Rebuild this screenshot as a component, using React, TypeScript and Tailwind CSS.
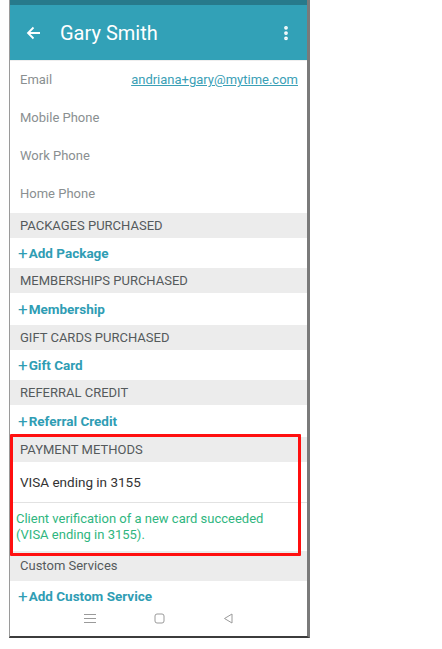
import { MoreVertical } from 'lucide-react'

const font = { fontFamily: 'Roboto, "Noto Sans", sans-serif' }

function InfoRow({ label, value }: { label: string; value?: string }) {
  return (
    <div className="flex h-[38px] items-center justify-between pl-[10px] pr-[9px] bg-white">
      <span className="text-[13px] text-[#8a8f91]">{label}</span>
      {value && <span className="text-[13px] text-[#3aa0b6] underline">{value}</span>}
    </div>
  )
}

function SectionHeader({ title, className = 'h-[25px]' }: { title: string; className?: string }) {
  return (
    <div className={`flex items-center pl-[10px] bg-[#ececec] text-[13px] text-[#555a5c] ${className}`}>
      {title}
    </div>
  )
}

function AddRow({ label, height = 'h-[30px]' }: { label: string; height?: string }) {
  return (
    <div className={`flex items-center pl-[8px] bg-white text-[13.5px] font-bold text-[#2f9db4] ${height}`}>
      <span className="text-[17px] font-normal leading-none mr-[1px]">+</span>
      {label}
    </div>
  )
}

export default function App() {
  return (
    <div className="w-[442px] h-[649px] bg-white" style={font}>
      <div className="ml-[9px] w-[301px] h-[638px] border-l border-[#9a9a9a] border-r-[3px] border-r-[#7a7a7a] border-b-2 border-b-[#3c3c3c] flex flex-col overflow-hidden relative">
        <div className="h-[5px] bg-[#277a8b]" />
        <div className="h-[55px] bg-[#32a1b7] flex items-center text-white">
          <svg width="16" height="16" viewBox="0 0 16 16" className="ml-[16px]" fill="none" stroke="white" strokeWidth="1.8">
            <path d="M14 8H2M7.5 2.5L2 8l5.5 5.5" />
          </svg>
          <span className="ml-[18px] text-[20px]">Gary Smith</span>
          <MoreVertical className="ml-auto mr-[12px] w-[18px] h-[18px]" strokeWidth={3} />
        </div>
        <div className="h-px bg-[#eeeeee]" />

        <InfoRow label="Email" value="andriana+gary@mytime.com" />
        <InfoRow label="Mobile Phone" />
        <InfoRow label="Work Phone" />
        <InfoRow label="Home Phone" />

        <SectionHeader title="PACKAGES PURCHASED" />
        <AddRow label="Add Package" />
        <SectionHeader title="MEMBERSHIPS PURCHASED" />
        <AddRow label="Membership" height="h-[32px]" />
        <SectionHeader title="GIFT CARDS PURCHASED" />
        <AddRow label="Gift Card" />
        <SectionHeader title="REFERRAL CREDIT" />
        <AddRow label="Referral Credit" height="h-[32px]" />

        <SectionHeader title="PAYMENT METHODS" />
        <div className="h-[41px] flex items-center pl-[10px] border-b border-[#e2e2e2] text-[13.5px] text-[#333]">
          VISA ending in 3155
        </div>
        <div className="h-[48px] flex flex-col justify-center pl-[6px] text-[13px] leading-[16px] text-[#2fb680]">
          <span>Client verification of a new card succeeded</span>
          <span>(VISA ending in 3155).</span>
        </div>

        <SectionHeader title="Custom Services" className="h-[30px] text-[13.5px] text-[#4a4f51]" />
        <div className="h-[21px] overflow-hidden">
          <div className="h-[30px] flex items-center pl-[8px] text-[13.5px] font-bold text-[#2f9db4]">
            <span className="text-[17px] font-normal leading-none mr-[1px]">+</span>
            Add Custom Service
          </div>
        </div>

        <div className="flex-1 bg-white flex items-center justify-center gap-[58px] pb-[2px]">
          <svg width="12" height="11" viewBox="0 0 12 11" fill="none" stroke="#9a9a9a" strokeWidth="1">
            <path d="M0 1.5h12M0 5.5h12M0 9.5h12" />
          </svg>
          <svg width="11" height="11" viewBox="0 0 11 11" fill="none" stroke="#9a9a9a" strokeWidth="1">
            <rect x="1" y="1" width="9" height="9" rx="2" />
          </svg>
          <svg width="10" height="11" viewBox="0 0 10 11" fill="none" stroke="#9a9a9a" strokeWidth="1">
            <path d="M9 1L1.5 5.5L9 10Z" />
          </svg>
        </div>

        <div className="absolute left-0 top-[434px] w-[291px] h-[122px] border-[3px] border-[#ff0f0f] rounded-[1px]" />
      </div>
    </div>
  )
}
